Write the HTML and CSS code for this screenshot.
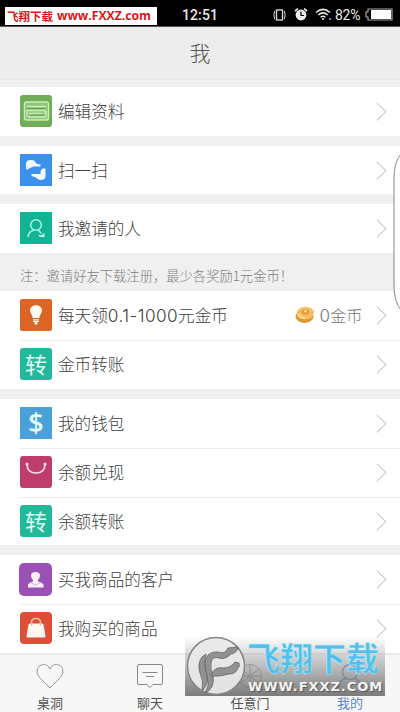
FILE: index.html
```
<!DOCTYPE html>
<html lang="zh-CN">
<head>
<meta charset="utf-8">
<title>我</title>
<link rel="stylesheet" href="styles.css">
</head>
<body>
<div class="phone">
  <header class="status">
    <div class="site-tag"><span class="tag-cn">飞翔下载</span><span class="tag-url">www.FXXZ.com</span></div>
    <span class="clock">12:51</span>
    <div class="status-icons">
      <svg width="15" height="12" viewBox="0 0 15 12" fill="none" stroke="#ddd"><rect x="4.5" y="1" width="6" height="10" stroke-width="1.3"/><path d="M2.5 2v2l-1 1 1 1-1 1 1 1v2M12.5 2v2l1 1-1 1 1 1-1 1v2"/></svg>
      <svg class="alarm" width="14" height="13" viewBox="0 0 14 13"><circle cx="7" cy="7" r="5.4" fill="#eee"/><path d="M1 3l3-2.3M13 3L10 .7" stroke="#eee" stroke-width="1.6"/><path d="M7 3.5V7.5H10" fill="none" stroke="#000" stroke-width="1.2"/></svg>
      <svg class="wifi" width="17" height="13" viewBox="0 0 17 13" fill="none" stroke="#e4e4e4" stroke-width="1.5"><path d="M1 4.5Q8-1.8 15 4.5M3.3 7Q8 2.8 12.7 7M5.6 9.3Q8 7.2 10.4 9.3"/><circle cx="8" cy="11" r="1" fill="#eee" stroke="none"/><circle cx="15" cy="11" r="1" fill="#aaa" stroke="none"/></svg>
      <span class="percent">82%</span>
      <svg class="battery" width="28" height="13" viewBox="0 0 28 13"><path d="M3 1h24v11H3V9H1V4h2z" fill="none" stroke="#aaa" stroke-width="1.2"/><path d="M6 2h20v9H6z" fill="#fff"/></svg>
    </div>
  </header>
  <h1 class="title">我</h1>

  <main class="list">
    <section class="group">
      <a class="row"><svg class="icon" viewBox="0 0 32 32"><rect width="32" height="32" rx="3" fill="#72ad5a"/><rect x="4.5" y="7" width="24" height="18" rx="2" fill="#8fc57b" stroke="#c7efb5" stroke-width="1.4"/><path d="M7 11.5h19M7 15.5h18v3M7 15v7M9 18.5h14M8 22h18v-6" fill="none" stroke="#c7efb5" stroke-width="1.3"/><path d="M7 13.5h18M10 20h14" stroke="#64984f"/></svg><span class="label">编辑资料</span><i class="arrow"></i></a>
    </section>
    <section class="group">
      <a class="row short"><svg class="icon" viewBox="0 0 32 32"><rect width="32" height="32" fill="#3a91ee"/><path d="M6 15.500V10Q6 6 10.500 6Q15 5.500 16 9.500L20.500 10.500V12.500H14L10 14L8 15.500zM25.500 14.500V22Q25.500 26 21 26Q18 26 16 23.500L11.500 22V20H20.500V17L22.500 14.500z" fill="#f0faff"/></svg><span class="label">扫一扫</span><i class="arrow"></i></a>
    </section>
    <section class="group">
      <a class="row"><svg class="icon" viewBox="0 0 32 32"><rect width="32" height="32" fill="#12b294"/><g fill="none" stroke="#a5f5df" stroke-width="1.600"><circle cx="16" cy="13" r="5.300"/><path d="M8 25Q8.500 19 14 18.500M18 18l3.500 3.500"/></g><path d="M18 22.500l3 1 3.500-2.500v4H20z" fill="#c9fff0"/></svg><span class="label">我邀请的人</span><i class="arrow"></i></a>
    </section>
    <p class="note">注：邀请好友下载注册，最少各奖励1元金币！</p>
    <section class="group">
      <a class="row"><svg class="icon" viewBox="0 0 32 32"><rect width="32" height="32" rx="2" fill="#db6426"/><path d="M12.500 19Q12.500 16.500 11 14.500Q9 11 11 8.500Q13 6 16 6T21 8.500Q23 11 21 14.500Q19.500 16.500 19.500 19zM13 20h6v3h-1.500v2.500h-3V23H13z" fill="#fffaf2"/><path d="M13 21.200h6" stroke="#db6426" stroke-width=".7"/></svg><span class="label">每天领<span class="digits">0.1-1000</span>元金币</span><svg class="coin" width="20" height="18" viewBox="0 0 20 18"><ellipse cx="9.500" cy="10.500" rx="9" ry="6.500" fill="#dd9b3a"/><ellipse cx="10.500" cy="7" rx="8.500" ry="6.300" fill="#f6bf62"/><ellipse cx="10.500" cy="6" rx="4" ry="2.700" fill="#e49b3b"/><path d="M3 8Q4 12 10 12" fill="none" stroke="#ffe4a0" stroke-width="1.600"/><circle cx="10.500" cy="5.200" r="1.200" fill="#ffe3a0"/></svg><span class="value"><span class="zero">0</span>金币</span><i class="arrow"></i></a>
      <a class="row"><span class="icon glyph">转</span><span class="label">金币转账</span><i class="arrow"></i></a>
    </section>
    <section class="group">
      <a class="row"><span class="icon glyph dollar">$</span><span class="label">我的钱包</span><i class="arrow"></i></a>
      <a class="row"><svg class="icon" viewBox="0 0 32 32"><rect width="32" height="32" rx="3" fill="#bf3d6c"/><path d="M7 8Q7 17 16 17T25 8" fill="none" stroke="#ffdceb" stroke-width="1.700"/><circle cx="7" cy="8" r="1.500" fill="#ffdceb"/><circle cx="25" cy="8" r="1.500" fill="#ffdceb"/></svg><span class="label">余额兑现</span><i class="arrow"></i></a>
      <a class="row short"><span class="icon glyph">转</span><span class="label">余额转账</span><i class="arrow"></i></a>
    </section>
    <section class="group">
      <a class="row"><svg class="icon big" viewBox="0 0 33 33"><rect width="33" height="33" rx="5" fill="#9b50b5"/><path d="M9 24.500V22Q9 20 14 18.500V17Q12 15 12 12.500Q12 9 16.500 9T21 12.500Q21 15 19 17v1.500Q24.500 20 24.500 22v2.500z" fill="#fff3fb"/><path d="M12 20l4.500 2L21 20" fill="none" stroke="#c79ad6" stroke-width=".8"/></svg><span class="label">买我商品的客户</span><i class="arrow"></i></a>
      <a class="row"><svg class="icon" viewBox="0 0 32 32"><rect width="32" height="32" rx="4" fill="#df4f38"/><path d="M8.500 12.500Q9 11.500 10 11.500H22Q23 11.500 23.500 12.500L25.500 24Q25.500 25.500 24 25.500H8Q6.500 25.500 6.500 24z" fill="#fff6f0"/><path d="M11.500 14v-3.500Q11.500 6.500 16 6.500T20.500 10.500V14" fill="none" stroke="#f8b9a8" stroke-width="1.600"/></svg><span class="label">我购买的商品</span><i class="arrow"></i></a>
    </section>
  </main>

  <nav class="tabs">
    <a class="tab"><svg width="28" height="26" viewBox="0 0 28 26" fill="none" stroke="#999"><path d="M14 25L3.500 14.500Q-.5 10 1.500 5.500Q3 1.500 7.500 1.500Q12 1.500 14 6Q16 1.500 20.500 1.500Q25 1.500 26.500 5.500Q28.500 10 24.500 14.500z"/></svg><span>桌洞</span></a>
    <a class="tab"><svg width="28" height="26" viewBox="0 0 28 26" fill="none" stroke="#888"><path d="M3 1.500h22q1.500 0 1.500 1.500v17q0 1.500-1.500 1.500h-8L14 24.500l-3-3H3q-1.500 0-1.500-1.500V3Q1.500 1.500 3 1.500zM6.500 9.500h15M10 13.500h8"/></svg><span>聊天</span></a>
    <a class="tab"><svg width="28" height="26" viewBox="0 0 28 26" fill="none" stroke="#777"><circle cx="14" cy="13" r="11.500"/><path d="M3 13h22M14 2v23M5 6l18 14M23 6L5 20"/></svg><span>任意门</span></a>
    <a class="tab active"><svg width="28" height="26" viewBox="0 0 28 26" fill="none" stroke="#3f70b8" stroke-width="1.500"><circle cx="14" cy="9" r="7.500"/><path d="M2 25Q3 17 10 15.500M18 15.500Q25 17 26 25"/></svg><span>我的</span></a>
  </nav>

  <svg class="edge" width="7" height="158" viewBox="0 0 7 158"><path d="M8 1Q1 9 1 25V132Q1 149 8 157z" fill="#fff" stroke="#888"/></svg>

  <div class="watermark">
    <svg class="wm-logo" width="60" height="60" viewBox="0 0 60 60"><circle cx="31" cy="30" r="28.500" fill="#e9e9e9" fill-opacity=".94" stroke="#858585" stroke-width="1.500"/><g fill="#929292" stroke="#606060" stroke-width=".8"><path d="M20 56Q25 50 22 42Q17 27 23 19Q29 14 37 17Q41 17 43 12L53 11Q52 17 46 18Q40 24 34 22Q27 20 26 27Q25 32 28 40Q30 51 21 57z"/><path d="M17 54Q19 45 15 37Q12 28 17 21L21 18Q18 28 21 36Q25 46 18 54zM26 40Q29 30 38 32Q46 32 50 26L54 27Q55 31 53 32Q51 38 44 38Q34 41 26 40z"/></g></svg>
    <div class="wm-words">
      <div class="wm-name">飞翔下载</div>
      <div class="wm-url">WWW.FXXZ.COM</div>
    </div>
  </div>
</div>
</body>
</html>
```
FILE: styles.css
```
* { box-sizing: border-box; }
body { margin: 0; font-family: "Noto Sans", "Noto Sans CJK SC", sans-serif; }
svg { display: block; flex: none; }

.phone {
  position: relative;
  width: 400px;
  height: 712px;
  overflow: hidden;
  display: flex;
  flex-direction: column;
  background: #f0f0f0;
}

.status {
  height: 27px;
  flex: none;
  display: grid;
  grid-template-columns: 177px 46px 1fr;
  align-items: center;
  background: #000;
  border-bottom: 1px solid #555;
  color: #e8e8e8;
}
.site-tag {
  width: 152px;
  height: 18px;
  margin: 4px 0 0 5px;
  padding-left: 2px;
  display: flex;
  align-items: center;
  background: #fff;
  color: #dc1818;
  white-space: nowrap;
  line-height: 18px;
}
.tag-cn { width: 50px; font: bold 11.5px/18px "Noto Sans CJK SC", sans-serif; }
.tag-url { font: bold 12.2px/18px "Open Sans", sans-serif; }
.clock { font: 500 14px/26px Roboto, sans-serif; letter-spacing: .1px; padding: 2px 0 0 5px; }
.status-icons { display: flex; align-items: center; padding: 1px 0 0 49px; }
.alarm { margin-left: 7px; }
.wifi { margin-left: 7px; }
.percent { width: 31px; margin-left: 3px; font: 14px/26px Roboto, sans-serif; letter-spacing: -.3px; }
.battery { margin-left: -1px; }

.title {
  height: 53px;
  flex: none;
  margin: 0;
  border-bottom: 1px solid #e7e7e7;
  background: #ededed;
  color: #555;
  font: 300 21px/51px "Noto Sans CJK SC", sans-serif;
  text-align: center;
}

.list { flex: none; height: 573px; padding-top: 7px; }
.group { margin-bottom: 10px; background: #fff; }
.row {
  height: 49px;
  padding: 0 14px 1px 20px;
  display: flex;
  align-items: center;
  position: relative;
}
.row.short { height: 48px; padding-bottom: 0; }
.row + .row { background: linear-gradient(#ededed, #ededed) 20px 0 / 380px 1px no-repeat; }
.icon { width: 32px; height: 32px; margin-right: 6px; }
.icon.big { width: 33px; height: 33px; margin-left: -1px; }
.glyph {
  border-radius: 3px;
  background: #22b899;
  color: #e2fff8;
  font: 22px/31px "Noto Sans CJK SC", sans-serif;
  text-align: center;
}
.dollar { border-radius: 0; background: #4aa0d8; font: 600 27px/32px "Open Sans", sans-serif; }
.label {
  flex: 1;
  color: #404040;
  font: 300 16.6px/47px "Noto Sans CJK SC", sans-serif;
  white-space: nowrap;
}
.digits { font: 300 17.2px/1 Inter, sans-serif; letter-spacing: .45px; }
.value { margin: 0 8px 0 4px; color: #777; font: 300 16.3px/47px "Noto Sans CJK SC", sans-serif; }
.zero { font: 300 17px/1 Inter, sans-serif; }
.arrow {
  width: 12.500px;
  height: 12.500px;
  margin-right: 3px;
  border: solid #c3c3c3;
  border-width: 1px 1px 0 0;
  transform: rotate(45deg);
}
.note {
  height: 38px;
  margin: -10px 0 0;
  padding: 5px 0 0 20px;
  color: #7e7e7e;
  font: 300 13.3px/36px "Noto Sans CJK SC", sans-serif;
  white-space: nowrap;
}

.tabs {
  flex: none;
  height: 59px;
  display: grid;
  grid-template-columns: repeat(4, 1fr);
  border-top: 2px solid #ebebeb;
  background: #f7f7f7;
}
.tab {
  padding-top: 8px;
  display: flex;
  flex-direction: column;
  align-items: center;
  color: #505050;
  font: 13px/18px "Noto Sans CJK SC", sans-serif;
}
.tab span { margin-top: 5px; }
.active { color: #5d83cc; }

.edge { position: absolute; right: 0; top: 153px; }

.watermark {
  position: absolute;
  left: 185px;
  top: 636px;
  width: 200px;
  height: 60px;
  display: flex;
  background: linear-gradient(rgba(210,210,210,0), rgba(165,165,165,.7) 50%, rgba(112,112,112,.92));
}
.wm-words { padding-left: 2px; }
.wm-name {
  height: 44px;
  color: #52c0ea;
  font: 700 33px/42px "Noto Sans CJK SC", sans-serif;
  -webkit-text-stroke: .4px #d8f4ff;
  white-space: nowrap;
}
.wm-url {
  padding-left: 1px;
  color: #f4f4f4;
  font: bold 13px/13px "DejaVu Sans", sans-serif;
  letter-spacing: .95px;
  text-shadow: 1px 1px 1px #555;
  white-space: nowrap;
}
```
